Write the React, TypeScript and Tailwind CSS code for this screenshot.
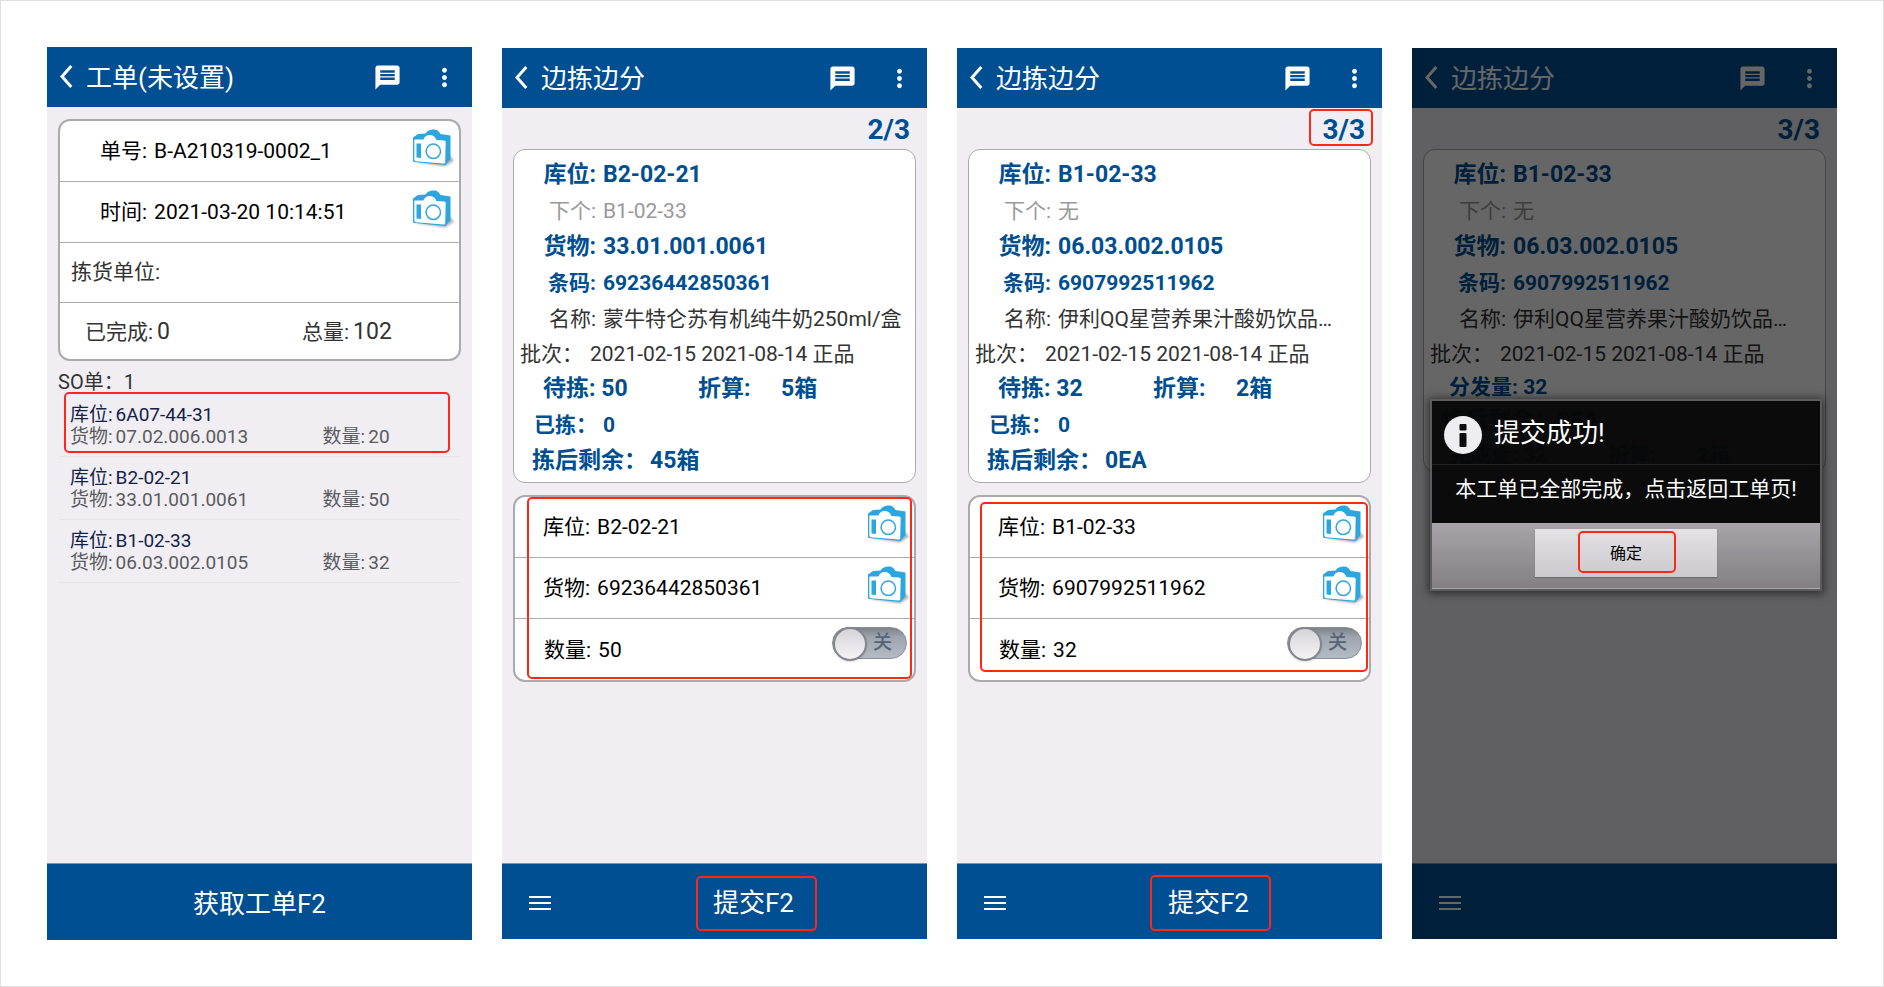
import { Fragment, type ReactNode } from "react";
import { MdMessage, MdMoreVert } from "react-icons/md";
import clsx from "clsx";

const NAVY = "text-[#004f92] font-bold";

type Detail = { label: string; value: string; kind: "big" | "code" | "muted" | "plain" };

const styles = {
  big: clsx("text-[23px]", NAVY),
  code: clsx("text-[21px]", NAVY),
  muted: "text-[21px] text-[#999999]",
  plain: "text-[21px] text-[#333333]",
};

const orders = [
  { slot: "6A07-44-31", goods: "07.02.006.0013", qty: 20 },
  { slot: "B2-02-21", goods: "33.01.001.0061", qty: 50 },
  { slot: "B1-02-33", goods: "06.03.002.0105", qty: 32 },
];

const milk: Detail[] = [
  { label: "库位:", value: "B2-02-21", kind: "big" },
  { label: "下个:", value: "B1-02-33", kind: "muted" },
  { label: "货物:", value: "33.01.001.0061", kind: "big" },
  { label: "条码:", value: "69236442850361", kind: "code" },
  { label: "名称:", value: "蒙牛特仑苏有机纯牛奶250ml/盒", kind: "plain" },
];

const yogurt: Detail[] = [
  { label: "库位:", value: "B1-02-33", kind: "big" },
  { label: "下个:", value: "无", kind: "muted" },
  { label: "货物:", value: "06.03.002.0105", kind: "big" },
  { label: "条码:", value: "6907992511962", kind: "code" },
  { label: "名称:", value: "伊利QQ星营养果汁酸奶饮品…", kind: "plain" },
];

function Mark({ className }: { className: string }) {
  return (
    <div
      className={clsx(
        "absolute border-2 border-[#ff2716] rounded-[5px] pointer-events-none",
        className
      )}
    />
  );
}

function CameraIcon() {
  return (
    <svg viewBox="0 0 44 40" className="w-11 h-10">
      <defs>
        <filter id="soft" x="-20%" y="-50%" width="140%" height="200%">
          <feGaussianBlur stdDeviation="1.2" />
        </filter>
      </defs>
      <path d="M4 34 L34 38.5 L43 32.5 L38 27 Z" fill="#8d8f94" opacity="0.7" filter="url(#soft)" />
      {/* body with the darker right side */}
      <path
        d="M2 9.500 L7 6 L14.500 5.500 C16.500 2.500 19 1.500 22.500 1.500 C26.500 1.500 28 3.500 29.500 6 L39.500 7.500 L39.500 31 L34.500 37 L3.500 34 C2.500 34 2 33.500 2 32.500 Z"
        fill="#2ba6de"
      />
      <path
        d="M3.800 11.500 L12.500 11.500 C13.500 8.500 15.500 7 18.500 7 C22 7 24 8.500 25.500 12 L33 12.500 C34.300 12.600 34.700 13.200 34.700 14.400 L34.200 34 C34.200 35.200 33.600 35.700 32.500 35.600 L5 33.200 C3.800 33.100 3.300 32.500 3.300 31.300 L3.300 12 Z"
        fill="#fff"
      />
      <path d="M5.500 15.500 H10 V30 L5.500 29.600 Z" fill="#2ba6de" />
      <circle cx="22.300" cy="23.300" r="7.200" fill="#fff" stroke="#2ba6de" strokeWidth="1.500" />
    </svg>
  );
}

function TopBar({ title }: { title: string }) {
  return (
    <header className="h-15 shrink-0 bg-[#004f92] text-white flex items-center pl-3 pr-[13px]">
      <button aria-label="返回" className="w-[27px] flex">
        <svg viewBox="0 0 14 26" className="w-[14px] h-[26px]" fill="none" stroke="currentColor">
          <path d="M12.300 2 L3 12.500 L12.300 23" strokeWidth="3" />
        </svg>
      </button>
      <h1 className="flex-1 pt-[2px] text-[26px] leading-10">{title}</h1>
      <button aria-label="消息" className="mr-7">
        <MdMessage size={29} />
      </button>
      <button aria-label="更多">
        <MdMoreVert size={29} />
      </button>
    </header>
  );
}

function Screen({ children, className }: { children: ReactNode; className?: string }) {
  return (
    <section className={clsx("flex-1 min-w-0 relative flex flex-col bg-[#f0eef2]", className)}>
      {children}
    </section>
  );
}

function Footer({ children }: { children?: ReactNode }) {
  return (
    <footer className="h-19 shrink-0 pt-[3px] bg-[#004f92] border-t border-[#8c8f94] text-white flex items-center">
      <button aria-label="菜单" className="w-[78px] flex flex-col gap-1 pl-[27px]">
        <span className="w-[22px] h-[2px] bg-white" />
        <span className="w-[22px] h-[2px] bg-white" />
        <span className="w-[22px] h-[2px] bg-white" />
      </button>
      {children}
    </footer>
  );
}

function PageCount({ children }: { children: ReactNode }) {
  return (
    <p className={clsx("h-[41px] leading-[43px] pr-[17px] text-right text-[28px]", NAVY)}>
      {children}
    </p>
  );
}

function DetailRows({ rows }: { rows: Detail[] }) {
  return (
    <dl className="grid grid-cols-[82px_1fr] gap-x-[7px] leading-9 whitespace-nowrap">
      {rows.map((row) => (
        <Fragment key={row.label}>
          <dt className={clsx("text-right", styles[row.kind])}>{row.label}</dt>
          <dd className={clsx("overflow-hidden", styles[row.kind])}>{row.value}</dd>
        </Fragment>
      ))}
    </dl>
  );
}

function Batch() {
  return (
    <div className={clsx("flex leading-[34px] pl-[6px] whitespace-nowrap", styles.plain)}>
      <span className="w-[70px]">批次：</span>
      <span>2021-02-15 2021-08-14 正品</span>
    </div>
  );
}

function ScanRow({ label, value, inset }: { label: string; value: string; inset: string }) {
  return (
    <div className={clsx("h-[61px] flex items-center justify-between pr-1", inset)}>
      <span className="flex gap-[7px] pt-px text-[21px] text-black">
        <span>{label}</span>
        <span>{value}</span>
      </span>
      <button aria-label={`扫描${label}`} className="pb-[6px]">
        <CameraIcon />
      </button>
    </div>
  );
}

function Toggle() {
  return (
    <label className="relative mb-[14px] w-[75px] h-8 rounded-full bg-linear-to-b from-[#7d828a] via-[#9ea5af] via-30% to-[#b4bbc5] border border-[#8b8f96] flex items-center justify-end pt-[2px] pr-[14px] text-[19px] font-medium text-[#566576]">
      <input type="checkbox" role="switch" aria-label="数量" className="sr-only" />
      <span className="absolute left-0 -top-px size-[34px] rounded-full border-2 border-[#85858c] bg-linear-to-b from-[#d5d4d8] to-[#f5f3f6] shadow-sm" />
      关
    </label>
  );
}

function Confirm({ slot, code, qty }: { slot: string; code: string; qty: number }) {
  return (
    <div className="mx-[11px] mt-3 bg-white border-2 border-[#ababad] rounded-xl divide-y divide-[#ababad]">
      <ScanRow label="库位:" value={slot} inset="pl-7" />
      <ScanRow label="货物:" value={code} inset="pl-7" />
      <div className="h-[61px] flex items-center justify-between pl-[29px] pr-[7px]">
        <span className="flex gap-[7px] pt-[3px] text-[21px] text-black">
          <span>数量:</span>
          <span>{qty}</span>
        </span>
        <Toggle />
      </div>
    </div>
  );
}

function PickScreen({
  page,
  rows,
  qty,
  boxes,
  rest,
  code,
  children,
}: {
  page: string;
  rows: Detail[];
  qty: number;
  boxes: string;
  rest: string;
  code: string;
  children: ReactNode;
}) {
  return (
    <Screen className="my-px">
      <TopBar title="边拣边分" />
      <PageCount>{page}</PageCount>
      <div className="mx-[11px] bg-white border border-[#ababad] rounded-xl pt-[7px] pb-[3px]">
        <DetailRows rows={rows} />
        <Batch />
        <div className={clsx("flex leading-9 pl-[29px]", styles.big)}>
          <span className="w-[155px]">待拣: {qty}</span>
          <span className="w-[83px]">折算:</span>
          <span>{boxes}</span>
        </div>
        <div className={clsx("flex leading-9 pl-5", styles.code)}>
          <span className="w-[69px]">已拣：</span>
          <span>0</span>
        </div>
        <div className={clsx("flex leading-9 pl-[18px]", styles.big)}>
          <span className="w-[118px]">拣后剩余：</span>
          <span>{rest}</span>
        </div>
      </div>
      <Confirm slot={rows[0].value} code={code} qty={qty} />
      <div className="flex-1" />
      <Footer>
        <button className="flex-1 text-[26px] leading-10">提交F2</button>
      </Footer>
      {children}
    </Screen>
  );
}

function OrderScreen() {
  return (
    <Screen>
      <TopBar title="工单(未设置)" />
      <div className="mx-[11px] mt-3 bg-white border-2 border-[#ababad] rounded-xl divide-y divide-[#ababad] text-[21px] text-[#333333]">
        <ScanRow label="单号:" value="B-A210319-0002_1" inset="pl-10" />
        <ScanRow label="时间:" value="2021-03-20 10:14:51" inset="pl-10" />
        <div className="h-[60px] pl-[11px] pt-px flex items-center">拣货单位:</div>
        <div className="h-14 pl-[25px] pt-[3px] flex items-center">
          <div className="w-[217px] flex items-center gap-1">
            已完成:<span className="text-[23px]">0</span>
          </div>
          <div className="flex items-center gap-1">
            总量:<span className="text-[23px]">102</span>
          </div>
        </div>
      </div>
      <p className="pl-[11px] pt-[9px] text-[20px] leading-6 text-[#333333]">SO单：1</p>
      <ul className="mx-3 text-[19px] leading-[22px]">
        {orders.map((o) => (
          <li key={o.slot} className="pt-[10px] pb-2 pl-[11px] border-b border-[#e6e4e8]">
            <div className="flex gap-[3px] text-[#14224a]">
              <span>库位:</span>
              <span>{o.slot}</span>
            </div>
            <div className="flex gap-[3px] text-[#5b5b5f]">
              <span>货物:</span>
              <span className="w-[204px]">{o.goods}</span>
              <span>数量:</span>
              <span>{o.qty}</span>
            </div>
          </li>
        ))}
      </ul>
      <div className="flex-1" />
      <button className="h-[77px] shrink-0 pt-1 bg-[#004f92] border-t border-[#8c8f94] text-white text-[26px]">
        获取工单F2
      </button>
      <Mark className="left-[17px] top-[345px] w-[386px] h-[61px]" />
    </Screen>
  );
}

function DoneScreen() {
  return (
    <Screen className="my-px">
      <TopBar title="边拣边分" />
      <PageCount>3/3</PageCount>
      <div className="mx-[11px] bg-white border border-[#ababad] rounded-xl pt-[7px]">
        <DetailRows rows={yogurt} />
        <Batch />
        <p className={clsx("pl-[25px] leading-8", styles.code)}>分发量: 32</p>
        <p className={clsx("pl-[18px] leading-9", styles.big)}>拣后剩余：0EA</p>
        <div className={clsx("pl-[25px] leading-8 flex", styles.code)}>
          <span className="w-[159px]">完成量: 32</span>
          <span className="w-[89px]">折算:</span>
          <span>2箱</span>
        </div>
      </div>
      <div className="flex-1" />
      <Footer />
      <div className="absolute inset-0 bg-black/60" />
      <div
        role="dialog"
        aria-label="提交成功"
        className="absolute left-[18px] right-[15px] top-[351px] border-2 border-[#5c5c5e] shadow-[0_1px_8px_2px_rgba(0,0,0,0.5)] text-white"
      >
        <div className="bg-[#070707]/96">
          <div className="h-16 flex items-center gap-3 pl-3 border-b border-[#222222]">
            <svg viewBox="0 0 38 38" className="size-[38px] mt-1">
              <circle cx="19" cy="19" r="19" fill="#eeedf0" />
              <rect x="15.500" y="8" width="7" height="6.500" rx="1" fill="#0a0a0a" />
              <rect x="15.500" y="17" width="7" height="14" rx="1" fill="#0a0a0a" />
            </svg>
            <h2 className="text-[26px] leading-10">提交成功!</h2>
          </div>
          <p className="h-[58px] pt-2 text-center text-[21px] leading-8 whitespace-nowrap">
            本工单已全部完成，点击返回工单页!
          </p>
        </div>
        <div className="h-[66px] bg-linear-to-b from-[#a6a4a8] to-[#828083] border-y border-[#a9a7ab] flex justify-center pt-[5px]">
          <button className="w-[182px] h-12 pt-[2px] bg-linear-to-b from-[#e4e2e5] to-[#cbc9cd] shadow-[0_1px_1px_#6d6b6e] text-black text-[16px]">
            确定
          </button>
        </div>
        <Mark className="left-[146px] bottom-[16px] w-[98px] h-[42px]" />
      </div>
    </Screen>
  );
}

export default function App() {
  return (
    <main className="min-h-screen bg-white border border-[#e0e0e0] p-[46px] flex gap-[30px] font-[Roboto,'Noto_Sans_CJK_SC',sans-serif]">
      <OrderScreen />
      <PickScreen page="2/3" rows={milk} qty={50} boxes="5箱" rest="45箱" code="69236442850361">
        <Mark className="left-[25px] top-[449px] w-[385px] h-[182px]" />
        <Mark className="right-[110px] bottom-[8px] w-[121px] h-[55px]" />
      </PickScreen>
      <PickScreen page="3/3" rows={yogurt} qty={32} boxes="2箱" rest="0EA" code="6907992511962">
        <Mark className="right-[9px] top-[61px] w-[64px] h-[37px]" />
        <Mark className="left-[23px] top-[454px] w-[388px] h-[170px]" />
        <Mark className="right-[111px] bottom-[8px] w-[121px] h-[56px]" />
      </PickScreen>
      <DoneScreen />
    </main>
  );
}
